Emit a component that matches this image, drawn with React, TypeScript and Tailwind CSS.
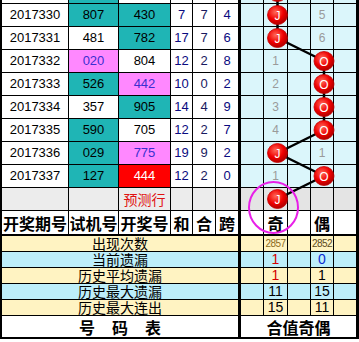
import React from "react";

type Row = {
    date: string;
    trial: string;
    trialBg: string;
    open: string;
    openBg: string;
    sum: string;
    he: string;
    kua: string;
    odd: boolean;
    miss: string;
};

// first row is the one above 2017330, only its bottom edge shows
const rows: Row[] = [
    { date: "", trial: "", trialBg: "bg-[#1fb5b5]", open: "", openBg: "bg-white", sum: "", he: "", kua: "", odd: true, miss: "" },
    { date: "2017330", trial: "807", trialBg: "bg-[#1fb5b5]", open: "430", openBg: "bg-[#1fb5b5]", sum: "7", he: "7", kua: "4", odd: true, miss: "5" },
    { date: "2017331", trial: "481", trialBg: "bg-white", open: "782", openBg: "bg-[#1fb5b5]", sum: "17", he: "7", kua: "6", odd: true, miss: "6" },
    { date: "2017332", trial: "020", trialBg: "bg-[#ff88ff]", open: "804", openBg: "bg-white", sum: "12", he: "2", kua: "8", odd: false, miss: "1" },
    { date: "2017333", trial: "526", trialBg: "bg-[#1fb5b5]", open: "442", openBg: "bg-[#ff88ff]", sum: "10", he: "0", kua: "2", odd: false, miss: "2" },
    { date: "2017334", trial: "357", trialBg: "bg-white", open: "905", openBg: "bg-[#1fb5b5]", sum: "14", he: "4", kua: "9", odd: false, miss: "3" },
    { date: "2017335", trial: "590", trialBg: "bg-[#1fb5b5]", open: "705", openBg: "bg-white", sum: "12", he: "2", kua: "7", odd: false, miss: "4" },
    { date: "2017336", trial: "029", trialBg: "bg-[#1fb5b5]", open: "775", openBg: "bg-[#ff88ff]", sum: "19", he: "9", kua: "2", odd: true, miss: "1" },
    { date: "2017337", trial: "127", trialBg: "bg-[#1fb5b5]", open: "444", openBg: "bg-[#ff0000]", sum: "12", he: "2", kua: "0", odd: false, miss: "1" },
];

const numColor = (bg: string) =>
    bg === "bg-[#ff88ff]" ? "text-[#3b2fd0]" : bg === "bg-[#ff0000]" ? "text-white" : "text-black";

const stats = [
    { label: "出现次数", bg: "bg-[#fff3c2]", a: "2857", ac: "text-[#8c6a1c]", b: "2852", bc: "text-[#5c4a20]", small: true },
    { label: "当前遗漏", bg: "bg-[#bdeefa]", a: "1", ac: "text-[#d40000]", b: "0", bc: "text-[#0a2ad0]", small: false },
    { label: "历史平均遗漏", bg: "bg-[#fff3c2]", a: "1", ac: "text-[#d40000]", b: "1", bc: "text-black", small: false },
    { label: "历史最大遗漏", bg: "bg-[#bdeefa]", a: "11", ac: "text-black", b: "15", bc: "text-black", small: false },
    { label: "历史最大连出", bg: "bg-[#fff3c2]", a: "15", ac: "text-black", b: "11", bc: "text-black", small: false },
];

const cell = "h-full border-r border-black flex items-center justify-center shrink-0";

// centres of the odd/even columns inside the right block
const ODD_X = 34.5;
const EVEN_X = 81;

function Trend() {
    const seq = [...rows.map((r) => r.odd), true];
    const pts = seq.map((odd, k) => ({ x: odd ? ODD_X : EVEN_X, y: 23 * k + 11, odd }));
    return (
        <svg className="absolute left-[241px] top-0 pointer-events-none" width={116} height={256}>
            <defs>
                <radialGradient id="ball" cx="40%" cy="35%" r="65%">
                    <stop offset="0%" stopColor="#ff6a5a" />
                    <stop offset="60%" stopColor="#f00000" />
                    <stop offset="100%" stopColor="#b00000" />
                </radialGradient>
            </defs>
            {pts.slice(1).map((p, i) => (
                <line key={i} x1={pts[i].x} y1={pts[i].y} x2={p.x} y2={p.y} stroke="#000" strokeWidth={2.5} />
            ))}
            {pts.map((p, i) => (
                <g key={i}>
                    <ellipse cx={p.x} cy={p.y} rx={10} ry={9.5} fill="url(#ball)" stroke="#c40000" strokeWidth={0.8} />
                    {i > 0 && (
                        <text x={p.x} y={p.y + 4.5} textAnchor="middle" fontSize={12} fill="#fff" fontFamily="'Liberation Sans', sans-serif">
                            {p.odd ? "J" : "O"}
                        </text>
                    )}
                </g>
            ))}
            <ellipse cx={30.5} cy={226.5} rx={24.5} ry={25.5} fill="none" stroke="#e81fe8" strokeWidth={2} />
        </svg>
    );
}

function RightCells({ odd, miss, bg }: { odd?: boolean; miss?: string; bg: string }) {
    const gray = "text-[12px] text-[#9a9a9a] font-['Liberation_Sans',sans-serif]";
    return (
        <div className={`flex h-full ${bg}`}>
            <div className={`${cell} w-[23px]`} />
            <div className={`${cell} w-[24px] ${gray}`}>{miss && !odd ? miss : ""}</div>
            <div className={`${cell} w-[23px]`} />
            <div className={`${cell} w-[23px] ${gray}`}>{miss && odd ? miss : ""}</div>
            <div className={`${cell} w-[23px]`} />
        </div>
    );
}

export default function App() {
    return (
        <div className="w-[359px] h-[342px] overflow-hidden bg-white font-['Liberation_Sans','Noto_Sans_CJK_SC',sans-serif]">
            <div className="-mt-[19px] border-l-2 border-r-2 border-black w-[359px]">
                <div className="relative">
                    {/* data rows */}
                    {rows.map((r, i) => (
                        <div key={i} className="flex h-[23px] border-b border-black text-[13px]">
                            <div className={`${cell} w-[67px] bg-white`}>{r.date}</div>
                            <div className={`${cell} w-[50px] ${r.trialBg} ${numColor(r.trialBg)}`}>{r.trial}</div>
                            <div className={`${cell} w-[52px] ${r.openBg} ${numColor(r.openBg)}`}>{r.open}</div>
                            <div className={`${cell} w-[22px] bg-white text-[#0a0a80]`}>{r.sum}</div>
                            <div className={`${cell} w-[23px] bg-white text-[#1a1a60]`}>{r.he}</div>
                            <div className={`${cell} w-[25px] bg-white text-[#0a0a80] border-r-[3px]`}>{r.kua}</div>
                            <RightCells odd={r.odd} miss={r.miss} bg="bg-[#dbf6fb]" />
                        </div>
                    ))}

                    {/* prediction row */}
                    <div className="flex h-[23px] border-b border-black bg-[#ececec]">
                        <div className={`${cell} w-[67px]`} />
                        <div className={`${cell} w-[50px]`} />
                        <div className={`${cell} w-[52px] text-[14px] text-[#e01010] font-['Noto_Sans_CJK_SC',sans-serif]`}>预测行</div>
                        <div className={`${cell} w-[22px]`} />
                        <div className={`${cell} w-[23px]`} />
                        <div className={`${cell} w-[25px] border-r-[3px]`} />
                        <RightCells bg="bg-[#e4e4e4]" />
                    </div>

                    {/* header */}
                    <div className="flex h-[25px] border-b-2 border-black bg-white text-[16px] font-bold leading-none font-['Noto_Sans_CJK_SC',sans-serif]">
                        <div className={`${cell} w-[67px] whitespace-nowrap`}>开奖期号</div>
                        <div className={`${cell} w-[50px]`}>试机号</div>
                        <div className={`${cell} w-[52px]`}>开奖号</div>
                        <div className={`${cell} w-[22px]`}>和</div>
                        <div className={`${cell} w-[23px]`}>合</div>
                        <div className={`${cell} w-[25px] border-r-[3px]`}>跨</div>
                        <div className={`${cell} w-[23px]`} />
                        <div className={`${cell} w-[24px]`}>奇</div>
                        <div className={`${cell} w-[23px]`} />
                        <div className={`${cell} w-[23px]`}>偶</div>
                        <div className={`${cell} w-[23px]`} />
                    </div>

                    <Trend />
                </div>

                {/* statistics */}
                {stats.map((s) => (
                    <div key={s.label} className={`flex h-[16px] border-b border-black ${s.bg}`}>
                        <div className={`${cell} w-[239px] border-r-[3px] text-[14px] leading-[15px] font-['Noto_Sans_CJK_SC',sans-serif] text-black`}>
                            {s.label}
                        </div>
                        <div className={`${cell} w-[23px]`} />
                        <div className={`${cell} w-[24px] ${s.ac} ${s.small ? "text-[10px] tracking-tighter" : "text-[14px]"} font-['Liberation_Sans',sans-serif]`}>{s.a}</div>
                        <div className={`${cell} w-[23px]`} />
                        <div className={`${cell} w-[23px] ${s.bc} ${s.small ? "text-[10px] tracking-tighter" : "text-[14px]"} font-['Liberation_Sans',sans-serif]`}>{s.b}</div>
                        <div className={`${cell} w-[23px]`} />
                    </div>
                ))}

                {/* footer */}
                <div className="flex h-[23px] border-b-2 border-black bg-white text-[16px] font-bold font-['Noto_Sans_CJK_SC',sans-serif]">
                    <div className={`${cell} w-[239px] border-r-[3px] gap-[17px]`}>
                        <span>号</span>
                        <span>码</span>
                        <span>表</span>
                    </div>
                    <div className={`${cell} w-[116px]`}>合值奇偶</div>
                </div>
            </div>
        </div>
    );
}
